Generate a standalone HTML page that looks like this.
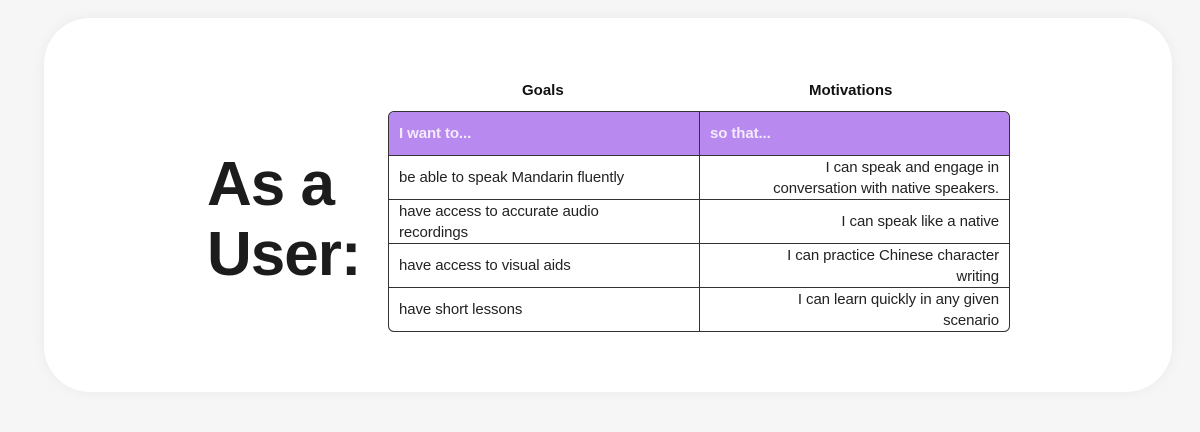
<!DOCTYPE html>
<html><head><style>
body{margin:0;width:1200px;height:432px;background:#f6f6f6;font-family:"Liberation Sans",sans-serif;position:relative;overflow:hidden}
.card{position:absolute;left:44px;top:18px;width:1128px;height:374px;background:#fff;border-radius:46px;box-shadow:0 0 14px rgba(0,0,0,0.05)}
.big{position:absolute;left:207px;top:150px;font-size:62px;font-weight:bold;line-height:70px;color:#1c1c1c;letter-spacing:-1px}
.hd{position:absolute;top:82px;font-size:15px;font-weight:bold;color:#111}
table{position:absolute;left:388px;top:111px;width:622px;border-collapse:separate;border-spacing:0;border:1.5px solid #333;border-radius:6px;overflow:hidden;font-size:15px;color:#222;letter-spacing:-0.1px}
td{padding:0 10px;border-top:1px solid #333;line-height:21px;width:290px;height:43px;box-sizing:border-box}
tr:not(:first-child) td{height:44px}
td+td{border-left:1px solid #333;text-align:right}
tr:first-child td{border-top:none;background:#b88af0;color:#f4eafd;font-weight:bold;text-align:left}
</style></head><body>
<div class="card"></div>
<div class="big">As a<br>User:</div>
<div class="hd" style="left:522px">Goals</div>
<div class="hd" style="left:809px">Motivations</div>
<table>
<tr><td>I want to...</td><td>so that...</td></tr>
<tr><td>be able to speak Mandarin fluently</td><td>I can speak and engage in<br>conversation with native speakers.</td></tr>
<tr><td>have access to accurate audio<br>recordings</td><td>I can speak like a native</td></tr>
<tr><td>have access to visual aids</td><td>I can practice Chinese character<br>writing</td></tr>
<tr><td>have short lessons</td><td>I can learn quickly in any given<br>scenario</td></tr>
</table>
</body></html>
